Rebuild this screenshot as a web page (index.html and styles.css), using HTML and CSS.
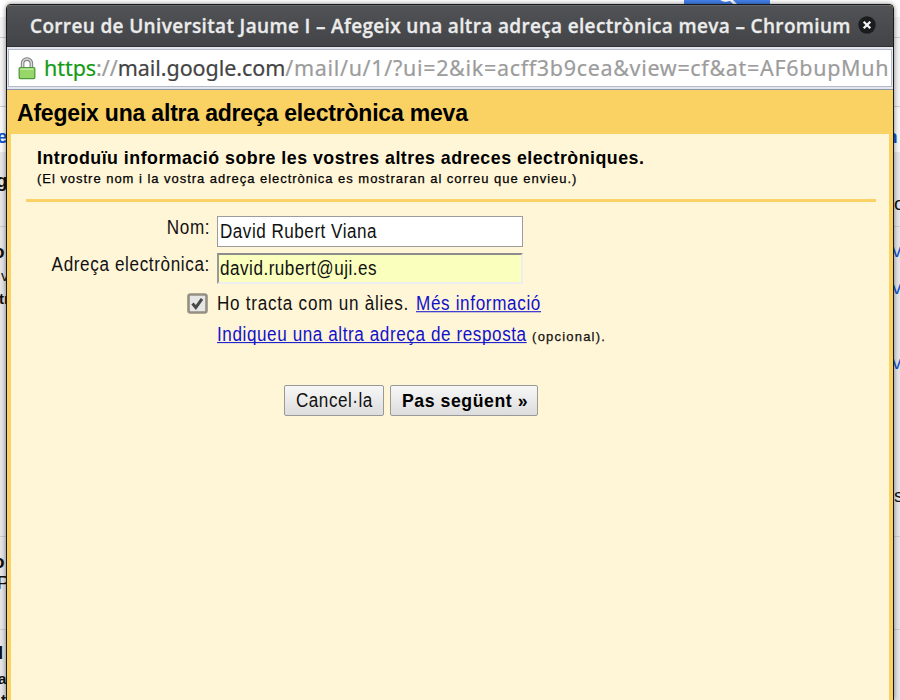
FILE: index.html
```html
<!DOCTYPE html>
<html lang="ca">
<head>
<meta charset="utf-8">
<title>Correu de Universitat Jaume I</title>
<link rel="stylesheet" href="styles.css">
</head>
<body>
<div class="backdrop">
  <div class="band band-top"></div>
  <div class="band band-bar"></div>
  <div class="band band-light"></div>
  <div class="band band-row"></div>
  <div class="band band-row band-tall"></div>
  <div class="band band-row band-mid"></div>
</div>
<div class="search"><svg width="86" height="5" viewBox="0 0 86 5"><path d="M37 -1Q41 2 46 -1M46 -1L53 6" fill="none" stroke="#fff" stroke-width="2.8"/></svg></div>
<span class="peek link heavy l1">e</span>
<span class="peek heavy l2">g</span>
<span class="peek heavy l3">o</span>
<span class="peek small l4">v</span>
<span class="peek small heavy l5">tr</span>
<span class="peek heavy l6">o</span>
<span class="peek l7">P</span>
<span class="peek heavy l8">l</span>
<span class="peek small heavy l9">a</span>
<span class="peek small heavy l10">t</span>
<span class="peek link heavy r1">n</span>
<span class="peek r2">o</span>
<span class="peek link r3">v</span>
<span class="peek link r4">v</span>
<span class="peek link r5">v</span>
<span class="peek r6">s</span>

<main class="window">
  <header class="titlebar">
    <span class="title">Correu de Universitat Jaume I – Afegeix una altra adreça electrònica meva – Chromium</span>
    <svg class="close" width="18" height="18" viewBox="0 0 18 18"><circle cx="9" cy="9" r="8.7" fill="#1b1c1d"/><path d="M5.7 5.7l6.6 6.6M12.3 5.7l-6.6 6.6" stroke="#f4f4f4" stroke-width="2.3"/></svg>
  </header>
  <div class="toolbar">
    <div class="address">
      <svg class="lock" width="18" height="23" viewBox="0 0 18 23">
        <path d="M4.6 12V6.5a4.4 4.4 0 0 1 8.8 0V12" fill="none" stroke="#808080" stroke-width="3.6"/>
        <path d="M4.6 12V6.5a4.4 4.4 0 0 1 8.8 0V12" fill="none" stroke="#ddd" stroke-width="1.5"/>
        <rect x="1.2" y="10.6" width="15.6" height="11" rx="1" fill="#97d769" stroke="#4f9a3c" stroke-width="1.3"/>
        <path d="M2.5 12.2h13" stroke="#c9efad" stroke-width="1.2"/>
      </svg>
      <span class="url"><span class="secure">https</span>://<span class="host">mail.google.com</span><span class="path">/mail/u/1/?ui=2&amp;ik=acff3b9cea&amp;view=cf&amp;at=AF6bupMuh</span></span>
    </div>
  </div>
  <section class="panel">
    <h1>Afegeix una altra adreça electrònica meva</h1>
    <div class="content">
      <div class="intro">
        <h2>Introduïu informació sobre les vostres altres adreces electròniques.</h2>
        <p>(El vostre nom i la vostra adreça electrònica es mostraran al correu que envieu.)</p>
      </div>
      <div class="form">
        <label class="name"><span class="narrow">Nom:</span></label>
        <div class="field"><span class="narrow">David Rubert Viana</span></div>
        <label class="mail"><span class="narrow">Adreça electrònica:</span></label>
        <div class="field filled"><span class="narrow">david.rubert@uji.es</span></div>
        <svg class="check" width="21" height="21" viewBox="0 0 21 21">
          <rect x="1.5" y="1.5" width="18" height="18" rx="2" fill="#e6e6e6" stroke="#948f83" stroke-width="2.6"/>
          <path d="M5.5 10.5l3.3 4L15 5.8" fill="none" stroke="#484848" stroke-width="3"/>
        </svg>
        <div class="alias"><span class="narrow">Ho tracta com un àlies.</span><a class="narrow">Més informació</a></div>
        <div class="reply"><a class="narrow">Indiqueu una altra adreça de resposta</a><small>(opcional).</small></div>
      </div>
      <div class="actions">
        <div class="button cancel"><span class="narrow">Cancel·la</span></div>
        <div class="button next"><span class="narrow">Pas següent »</span></div>
      </div>
    </div>
  </section>
</main>
</body>
</html>
```
FILE: styles.css
```css
* { box-sizing: border-box; }
html { overflow: hidden; }
body { margin: 0; width: 900px; height: 700px; position: relative; overflow: hidden; background: #eee; font: 19px "Liberation Sans", Arial, sans-serif; color: #111; }
.narrow { display: inline-block; white-space: nowrap; transform-origin: left center; transform: scale(.9, 1.03); letter-spacing: .56px; }
.backdrop { display: flex; flex-direction: column; height: 700px; background: #e5e5e7; }
.band { border-bottom: 1px solid #ccc; flex: none; }
.band-top { height: 17px; background: #fff; border: 0; }
.band-bar { height: 21px; background: #f3f3f3; }
.band-light { height: 69px; background: #f4f4f4; }
.band-row { height: 120px; background: linear-gradient(#f7f7f7 45px, #e5e5e7 45px); }
.band-tall { height: 310px; background: none; }
.band-mid { height: 93px; background: none; }
.search { position: absolute; left: 684px; top: 0; width: 86px; height: 5px; background: #4481ed; overflow: hidden; }
.search svg { display: block; }
.peek { position: absolute; line-height: 20px; font-size: 19px; color: #111; }
.link { color: #1155cc; }
.heavy { font-weight: bold; }
.small { font-size: 15px; }
.l1 { left: -3px; top: 127px; } .l2 { left: -4px; top: 171px; } .l3 { left: -7px; top: 242px; }
.l4 { left: 1px; top: 266px; } .l5 { left: -1px; top: 289px; } .l6 { left: -7px; top: 552px; }
.l7 { left: -3px; top: 573px; } .l8 { left: -2px; top: 643px; } .l9 { left: -2px; top: 669px; } .l10 { left: 1px; top: 690px; }
.r1 { left: 886px; top: 127px; } .r2 { left: 894px; top: 194px; } .r3 { left: 892px; top: 241px; }
.r4 { left: 892px; top: 278px; } .r5 { left: 892px; top: 353px; } .r6 { left: 894px; top: 486px; }

.window { position: absolute; left: 6px; top: 4px; width: 888px; height: 696px; border: 1px solid #17181a; border-bottom: 0; border-radius: 5px 5px 0 0; overflow: hidden; display: flex; flex-direction: column; background: #fad163; box-shadow: 0 0 5px rgba(0,0,0,.5); }
.titlebar { height: 42px; flex: none; display: flex; align-items: center; background: linear-gradient(#505255, #424447); border-top: 1px solid #66686b; border-bottom: 1px solid #2e3032; padding: 0 17px 2px 23px; }
.title { width: 820px; color: #ececec; font: 600 19px "Open Sans", "Noto Sans", sans-serif; letter-spacing: .345px; -webkit-text-stroke: .3px #ececec; margin-right: 8px; padding-top: 2px; white-space: nowrap; }
.close { flex: none; }
.toolbar { height: 42px; flex: none; background: #e3e6ef; padding: 2px 1px 2px; }
.address { height: 38px; display: flex; align-items: center; background: #fff; border: 1px solid #b3bac8; padding-left: 9px; }
.lock { margin-right: 8px; flex: none; }
.url { font: 21.5px "Noto Sans", "Open Sans", sans-serif; color: #9c9c9c; white-space: nowrap; letter-spacing: -.05px; padding-bottom: 2px; -webkit-text-stroke: .2px; }
.path { letter-spacing: .68px; }
.secure { color: #139b13; }
.host { color: #444; }
.panel { flex: 1; display: flex; flex-direction: column; padding: 0 4px; background: #fad163; border-top: 1px solid #8f98a8; }
h1 { margin: 0; height: 44px; font-size: 23px; line-height: 47px; padding-left: 6px; color: #000; letter-spacing: -.2px; white-space: nowrap; }
.content { flex: 1; background: #fff5d7; }
.intro { margin: 0 13px 0 15px; height: 68px; padding: 13px 0 0 11px; border-bottom: 3px solid #fbd166; }
h2 { margin: 0; width: max-content; font-size: 19px; line-height: 22px; color: #000; letter-spacing: .52px; transform: scaleX(.936); transform-origin: left center; white-space: nowrap; }
p { margin: 0; font-size: 13px; line-height: 19px; color: #000; letter-spacing: .97px; white-space: nowrap; -webkit-text-stroke: .25px; }
.form { display: grid; grid-template-columns: 199px 306px 1fr; grid-template-rows: 31px 31px 28px 31px; row-gap: 6px; column-gap: 7px; padding-top: 14px; height: 183px; }
.form label { text-align: right; line-height: 24px; }
label .narrow { transform-origin: right center; letter-spacing: .7px; }
.field { border: 1px solid #9c9c9c; background: #fff; line-height: 29px; padding-left: 2px; }
.filled { border: 2px solid; border-color: #8c8c8c #eee #eee #999; background: #faffbd; line-height: 27px; padding-left: 1px; grid-column: 2; }
.name, .mail, .check { grid-column: 1; }
.check { justify-self: end; margin: 3px 2px 0 0; }
.alias, .reply { grid-column: 2 / 4; display: flex; white-space: nowrap; line-height: 28px; }
.alias span { letter-spacing: .83px; margin-right: -14.5px; }
.alias a { letter-spacing: .72px; }
.reply { line-height: 22px; }
.reply a { letter-spacing: .65px; margin-right: -29px; }
.narrow, small { flex: none; }
a { color: #1111cc; text-decoration: underline; text-decoration-skip-ink: none; }
small { font-size: 13px; letter-spacing: 1.2px; padding-top: 2px; -webkit-text-stroke: .25px; }
.actions { display: flex; gap: 6px; padding-left: 273px; }
.button { height: 31px; border: 1px solid #999; border-radius: 2px; background: linear-gradient(#f7f7f7, #ddd); line-height: 30px; padding-left: 11px; white-space: nowrap; }
.cancel { width: 100px; }
.next { width: 148px; font-weight: bold; color: #000; }
.next .narrow { transform: scaleX(.93); letter-spacing: .6px; }
```
